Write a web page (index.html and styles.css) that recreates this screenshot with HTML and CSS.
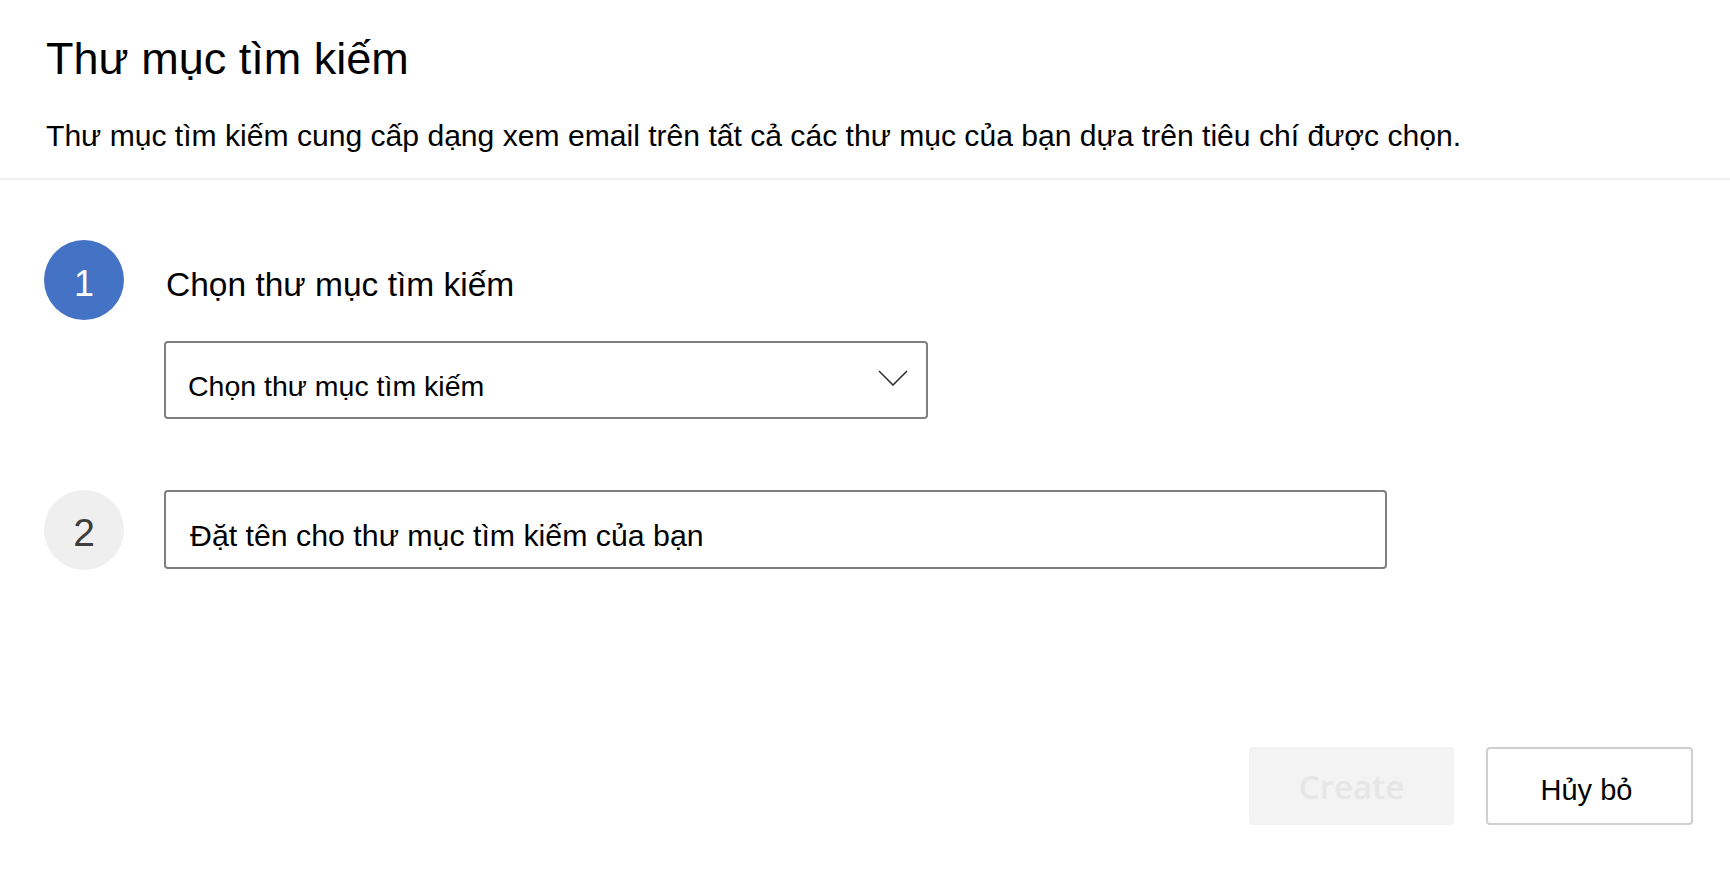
FILE: index.html
```html
<!DOCTYPE html>
<html>
<head>
  <meta charset="utf-8">
  <meta name="viewport" content="width=device-width, initial-scale=1">
  <title>Thư mục tìm kiếm</title>
  <link rel="stylesheet" href="styles.css">
</head>
<body>
  <div class="dialog">
    <div class="head">
      <h1 class="title">Thư mục tìm kiếm</h1>
      <p class="desc">Thư mục tìm kiếm cung cấp dạng xem email trên tất cả các thư mục của bạn dựa trên tiêu chí được chọn.</p>
    </div>

    <div class="steps">
      <div class="step">
        <div class="num num-active">1</div>
        <div class="step-body">
          <h2 class="step-title">Chọn thư mục tìm kiếm</h2>
          <div class="select">
            <span>Chọn thư mục tìm kiếm</span>
            <svg class="chevron" width="30" height="16" viewBox="0 0 30 16">
              <path d="M1 1 L15 15 L29 1" fill="none" stroke="#333" stroke-width="1.6"/>
            </svg>
          </div>
        </div>
      </div>

      <div class="step step-two">
        <div class="num">2</div>
        <div class="step-body">
          <div class="field">Đặt tên cho thư mục tìm kiếm của bạn</div>
        </div>
      </div>
    </div>

    <div class="actions">
      <button class="btn btn-create" type="button" disabled>Create</button>
      <button class="btn btn-cancel" type="button">Hủy bỏ</button>
    </div>
  </div>
</body>
</html>
```

FILE: styles.css
```css
*{
  margin: 0;
  padding: 0;
  box-sizing: border-box;
}
body
{
  font-family: "Liberation Sans", Arial, sans-serif;
  background: #fff;
  color: #000;
}
.dialog
{
  width: 100%;
  min-height: 100vh;
}
.head
{
  padding: 33px 46px 24px;
  border-bottom: 2px solid #f0f0f0;
}
.title
{
  font-size: 45px;
  font-weight: 400;
  line-height: 52px;
}
.desc
{
  margin-top: 33px;
  font-size: 30.1px;
  line-height: 36px;
}
.steps
{
  padding: 60px 0 0 44px;
}
.step
{
  display: flex;
  align-items: flex-start;
}
.step-two
{
  margin-top: 71px;
}
.num
{
  flex: none;
  width: 80px;
  height: 80px;
  border-radius: 50%;
  background: #efefef;
  color: #3d3d3d;
  font-size: 39px;
  display: flex;
  align-items: center;
  justify-content: center;
  padding-top: 5px;
}
.num-active
{
  background: #4472c4;
  color: #fff;
  font-size: 36px;
  padding-top: 7px;
}
.step-body
{
  margin-left: 40px;
}
.step-title
{
  font-size: 33.5px;
  font-weight: 400;
  line-height: 90px;
  padding-left: 2px;
}
.select
{
  margin-top: 11px;
  width: 764px;
  height: 78px;
  border: 2px solid #7f7f7f;
  border-radius: 4px;
  display: flex;
  align-items: center;
  justify-content: space-between;
  padding: 12px 18px 0 22px;
  font-size: 28.5px;
}
.chevron
{
  margin-top: -16px;
}
.field
{
  width: 1223px;
  height: 79px;
  border: 2px solid #7f7f7f;
  border-radius: 4px;
  display: flex;
  align-items: center;
  padding: 12px 0 0 24px;
  font-size: 30.3px;
}
.actions
{
  margin-top: 177px;
  display: flex;
  justify-content: flex-end;
  gap: 32px;
  padding-right: 37px;
}
.btn
{
  height: 78px;
  border-radius: 4px;
  display: flex;
  align-items: center;
  justify-content: center;
  cursor: pointer;
}
.btn-create
{
  width: 205px;
  border: none;
  background: #f3f3f3;
  color: #e6e6e6;
  font-family: "Open Sans", sans-serif;
  font-weight: 600;
  font-size: 33px;
  cursor: default;
}
.btn-cancel
{
  width: 207px;
  border: 2px solid #cfcfcf;
  background: #fff;
  color: #000;
  font-family: "Liberation Sans", Arial, sans-serif;
  font-size: 29px;
  padding: 8px 6px 0 0;
}
```
